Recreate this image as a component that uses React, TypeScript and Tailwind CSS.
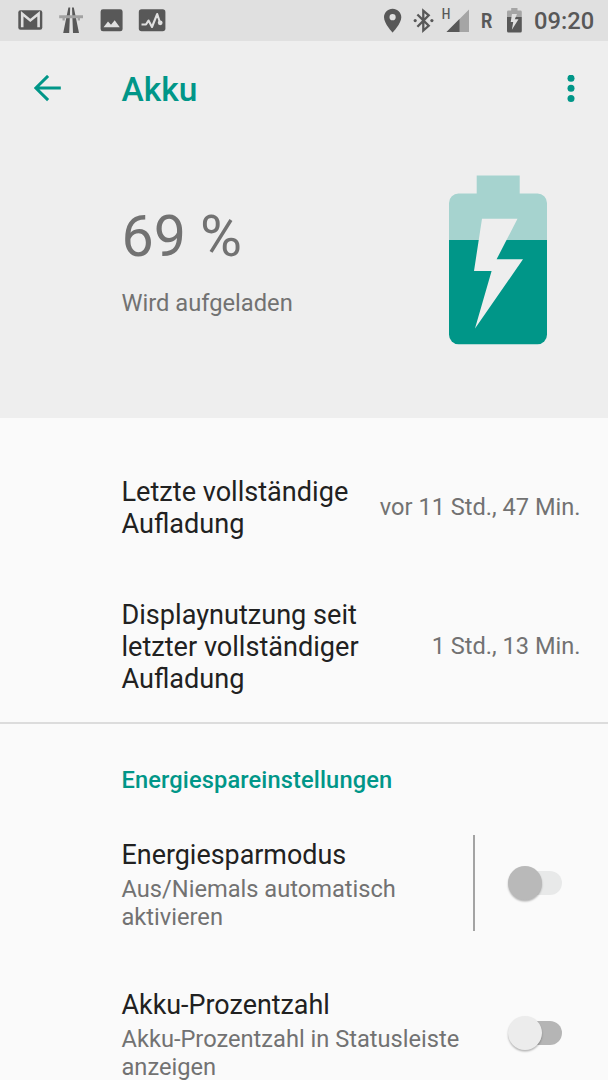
import { useState } from 'react'
import type { ReactNode } from 'react'

const usageStats = [
  {
    lines: ['Letzte vollständige', 'Aufladung'],
    value: 'vor 11 Std., 47 Min.',
    height: 'h-[122px]',
    titlePad: '',
    valuePad: 'pb-[2px]',
  },
  {
    lines: ['Displaynutzung seit', 'letzter vollständiger', 'Aufladung'],
    value: '1 Std., 13 Min.',
    height: 'h-[153px]',
    titlePad: 'pt-[2px]',
    valuePad: '',
  },
]

const Lines = ({ lines }: { lines: string[] }) => (
  <>
    {lines.map((line) => (
      <span key={line} className="block whitespace-nowrap">{line}</span>
    ))}
  </>
)

// ============================================
// STATUS BAR
// ============================================
const StatusBar = () => (
  <div className="flex h-[41px] shrink-0 items-center justify-between bg-[#e0e0e0] text-[#585858]">
    <svg width="200" height="41" viewBox="0 0 200 41">
      {/* Gmail */}
      <rect x="18.3" y="10.3" width="24" height="19.5" rx="2.2" fill="#585858" />
      <path d="M22.2 27.3V13.8L30.3 20.4L38.6 13.8V27.3" fill="none" stroke="#e0e0e0" strokeWidth="2.6" />
      {/* Autobahn */}
      <path d="M68.4 7.5H70.2L69.2 33H63.2ZM72 7.5H73.8L79 33H73Z" fill="#585858" />
      <path d="M59.2 15.2H83V18.3H80V20.5H77.7V18.3H64.8V20.5H62.5V18.3H59.2Z" fill="#a2a2a2" />
      {/* Picture */}
      <rect x="100.6" y="9.3" width="22" height="22" rx="2.4" fill="#585858" />
      <path d="M103.5 27.3L108 21.5L111 24.8L114.7 20.3L119.8 27.3Z" fill="#e0e0e0" />
      {/* Activity */}
      <rect x="138.8" y="9.3" width="26.6" height="22" rx="2.8" fill="#585858" />
      <path d="M141.5 24.5H146L148.5 20.5L152 27L157.2 14L160 22.5" fill="none" stroke="#e0e0e0" strokeWidth="2.1" strokeLinejoin="round" />
      <circle cx="160.2" cy="22.8" r="2.4" fill="#e0e0e0" />
    </svg>
    <div className="flex items-center">
      <svg width="158" height="41" viewBox="376 0 158 41">
        {/* Location */}
        <path fillRule="evenodd" d="M392.6 8.7C387.8 8.7 384 12.5 384 17.2C384 23.6 392.6 32.5 392.6 32.5S401.3 23.6 401.3 17.2C401.3 12.5 397.4 8.7 392.6 8.7ZM392.6 14.1A3.1 3.1 0 1 1 392.6 20.3A3.1 3.1 0 1 1 392.6 14.1Z" fill="#585858" />
        {/* Bluetooth */}
        <path d="M417.4 14.5L428.7 25.8L423.3 30.5V10.7L428.7 15.4L417.4 26.7" fill="none" stroke="#585858" strokeWidth="2.3" />
        <circle cx="415.2" cy="20.6" r="1.6" fill="#585858" />
        <circle cx="431.9" cy="20.6" r="1.6" fill="#585858" />
        {/* Signal */}
        <text x="441.8" y="18.9" textLength="8.6" lengthAdjust="spacingAndGlyphs" fill="#585858" className="font-['Roboto'] text-[14.5px] font-medium">H</text>
        <path d="M469 9.5V32H446.5Z" fill="#a5a5a5" />
        <path d="M459.5 19V32H446.5Z" fill="#585858" />
        <text x="480.9" y="27.7" textLength="11.4" lengthAdjust="spacingAndGlyphs" fill="#585858" className="font-['Roboto'] text-[20.5px] font-bold">R</text>
        {/* Battery */}
        <path d="M507 17V12Q507 10.6 508.4 10.6H511.2V8H517.5V10.6H520.4Q521.8 10.6 521.8 12V17Z" fill="#a5a5a5" />
        <path d="M507 17H521.8V31Q521.8 32.5 520.3 32.5H508.5Q507 32.5 507 31Z" fill="#585858" />
        <path d="M512 14H517L514.8 19.3H518.5L511.9 29.8L513.2 22.1H510.7Z" fill="#e0e0e0" />
      </svg>
      <span className="w-[74px] whitespace-nowrap pt-[1px] text-[23.7px] font-medium leading-[40px]">09:20</span>
    </div>
  </div>
)

const BatteryIcon = () => (
  <svg width="98" height="170" viewBox="0 0 98 170">
    <path d="M0 65V28A9.5 9.5 0 0 1 9.5 18.5H27.7V0.5H70.7V18.5H88.5A9.5 9.5 0 0 1 98 28V65Z" fill="#a6d3cf" />
    <path d="M0 65H98V159.7A9.5 9.5 0 0 1 88.5 169.2H9.5A9.5 9.5 0 0 1 0 159.7Z" fill="#009688" />
    <path d="M33 43.8H68.5L47.6 84.3H74L26 153.6L42.6 95.9H25Z" fill="#eeeeee" />
  </svg>
)

// ============================================
// SWITCH
// ============================================
const Switch = ({ label, disabled = false }: { label: string; disabled?: boolean }) => {
  const [on, setOn] = useState(false)

  return (
    <button
      role="switch"
      aria-checked={on}
      aria-label={label}
      disabled={disabled}
      onClick={() => setOn(!on)}
      className={`flex h-[24px] w-[50px] items-center rounded-full ${disabled ? 'bg-[#e8e9e9]' : on ? 'bg-[#80cbc4]' : 'bg-[#b5b5b5]'}`}
    >
      <span
        className={`h-[34px] w-[34px] shrink-0 rounded-full shadow-[0_1.5px_2px_rgba(0,0,0,0.28)] ${disabled ? 'bg-[#b9b9b9]' : on ? 'bg-[#009688]' : 'bg-[#ececec]'} ${on ? 'ml-[20px]' : '-ml-[4px]'}`}
      />
    </button>
  )
}

const SettingRow = ({ title, lines, children }: { title: string; lines: string[]; children: ReactNode }) => (
  <div className="flex h-[96px] shrink-0 pl-[121.5px] pr-[46px]">
    <div className="flex-1 pt-[4px]">
      <div className="text-[26.9px] leading-[32px] text-[#212121]">{title}</div>
      <div className="pt-[5px] text-[23.65px] leading-[27.7px] text-[#727272]">
        <Lines lines={lines} />
      </div>
    </div>
    {children}
  </div>
)

const App = () => (
  <div className="flex h-[1080px] w-[608px] flex-col overflow-hidden bg-[#fafafa] font-['Roboto',sans-serif]">
    <StatusBar />

    {/* Header */}
    <header className="h-[377px] shrink-0 bg-[#eeeeee]">
      <div className="flex h-[95px] items-center pl-[33.5px] pr-[33.5px] text-[#009688]">
        <button aria-label="Zurück" className="w-[88px]">
          <svg width="28" height="28" viewBox="0 0 28 28" fill="none" stroke="currentColor" strokeWidth="3">
            <path d="M26.8 13H1.4M14.1 0.9L1.8 13L14.1 25.1" />
          </svg>
        </button>
        <h1 className="flex-1 pt-[2px] text-[33.5px] font-medium leading-[40px]">Akku</h1>
        <button aria-label="Mehr">
          <svg width="8" height="28" viewBox="0 0 8 28" fill="currentColor">
            <circle cx="4" cy="3.2" r="3.5" />
            <circle cx="4" cy="13.2" r="3.5" />
            <circle cx="4" cy="23.4" r="3.5" />
          </svg>
        </button>
      </div>
      <div className="flex justify-between pl-[121.5px] pr-[61px] pt-[39px] text-[#727272]">
        <div className="pt-[28px]">
          <div className="text-[57.3px] leading-[68px]">69 %</div>
          <div className="pt-[17.5px] text-[23.7px] leading-[28px]">Wird aufgeladen</div>
        </div>
        <BatteryIcon />
      </div>
    </header>

    {/* Usage since last charge */}
    <section className="shrink-0 border-b-2 border-[#dcdcdc] pt-[29px]">
      {usageStats.map((stat) => (
        <div key={stat.value} className={`flex items-center justify-between pl-[121.5px] pr-[27.5px] ${stat.height}`}>
          <div className={`text-[27.1px] leading-[32px] text-[#212121] ${stat.titlePad}`}>
            <Lines lines={stat.lines} />
          </div>
          <div className={`whitespace-nowrap text-[23.6px] leading-[28px] text-[#727272] ${stat.valuePad}`}>{stat.value}</div>
        </div>
      ))}
    </section>

    {/* Power saving */}
    <section className="flex flex-col pt-[42px]">
      <h2 className="shrink-0 pl-[121.5px] text-[23.65px] font-medium leading-[28px] tracking-[0.12px] text-[#009688]">
        Energiespareinstellungen
      </h2>
      <div className="pt-[41px]">
        <SettingRow title="Energiesparmodus" lines={['Aus/Niemals automatisch', 'aktivieren']}>
          <div className="flex items-center border-l-2 border-[#a3a3a3] pl-[37px]">
            <Switch label="Energiesparmodus" disabled />
          </div>
        </SettingRow>
      </div>
      <div className="pt-[54px]">
        <SettingRow title="Akku-Prozentzahl" lines={['Akku-Prozentzahl in Statusleiste', 'anzeigen']}>
          <div className="flex items-center">
            <Switch label="Akku-Prozentzahl" />
          </div>
        </SettingRow>
      </div>
    </section>
  </div>
)

export default App
